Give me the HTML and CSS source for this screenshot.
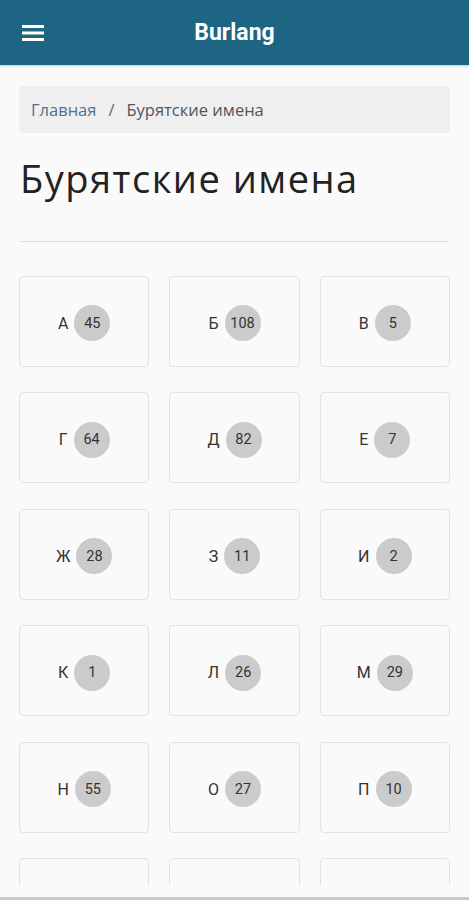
FILE: index.html
```html
<!DOCTYPE html>
<html lang="ru">
<head>
    <meta charset="UTF-8">
    <meta name="viewport" content="width=device-width, initial-scale=1.0">
    <title>Burlang - Бурятские имена</title>
    <link rel="stylesheet" href="styles.css">
</head>
<body>
    <div class="app">
        <header class="topbar">
            <button class="menu-btn" aria-label="Меню">
                <svg width="22" height="16" viewBox="0 0 22 16">
                    <rect x="0" y="0" width="22" height="3" fill="#fff"/>
                    <rect x="0" y="6.5" width="22" height="3" fill="#fff"/>
                    <rect x="0" y="13" width="22" height="3" fill="#fff"/>
                </svg>
            </button>
            <div class="brand">Burlang</div>
        </header>

        <main class="content">
            <nav class="breadcrumb">
                <a href="#">Главная</a>
                <span class="sep">/</span>
                <span class="current">Бурятские имена</span>
            </nav>

            <h1>Бурятские имена</h1>
            <hr>

            <div class="letters">
                <a class="letter-card" href="#">А <span class="badge">45</span></a>
                <a class="letter-card" href="#">Б <span class="badge">108</span></a>
                <a class="letter-card" href="#">В <span class="badge">5</span></a>
                <a class="letter-card" href="#">Г <span class="badge">64</span></a>
                <a class="letter-card" href="#">Д <span class="badge">82</span></a>
                <a class="letter-card" href="#">Е <span class="badge">7</span></a>
                <a class="letter-card" href="#">Ж <span class="badge">28</span></a>
                <a class="letter-card" href="#">З <span class="badge">11</span></a>
                <a class="letter-card" href="#">И <span class="badge">2</span></a>
                <a class="letter-card" href="#">К <span class="badge">1</span></a>
                <a class="letter-card" href="#">Л <span class="badge">26</span></a>
                <a class="letter-card" href="#">М <span class="badge">29</span></a>
                <a class="letter-card" href="#">Н <span class="badge">55</span></a>
                <a class="letter-card" href="#">О <span class="badge">27</span></a>
                <a class="letter-card" href="#">П <span class="badge">10</span></a>
                <a class="letter-card" href="#">Р <span class="badge">3</span></a>
                <a class="letter-card" href="#">С <span class="badge">40</span></a>
                <a class="letter-card" href="#">Т <span class="badge">30</span></a>
            </div>
        </main>

        <div class="bottom-band"></div>
    </div>
</body>
</html>
```

FILE: styles.css
```css
/* Page */
body {
    margin: 0;
    padding: 0;
    background-color: #fafafa;
    font-family: "Open Sans", "Noto Sans", sans-serif;
    color: #222;
}

.app {
    height: 900px;
    display: flex;
    flex-direction: column;
    overflow: hidden;
}

/* Top bar */
.topbar {
    height: 65px;
    flex-shrink: 0;
    background-color: #1e6584;
    display: flex;
    align-items: center;
    position: relative;
    box-shadow: 0 1px 2px rgba(0, 0, 0, 0.2);
}

.menu-btn {
    margin-left: 22px;
    padding: 0;
    border: none;
    background: none;
    display: flex;
    cursor: pointer;
}

.brand {
    position: absolute;
    left: 0;
    right: 0;
    text-align: center;
    font-family: Roboto, "Liberation Sans", sans-serif;
    font-weight: bold;
    font-size: 23px;
    color: #fff;
    pointer-events: none;
}

/* Content */
.content {
    flex: 1;
    overflow: hidden;
    padding: 21px 19px 0;
}

.breadcrumb {
    height: 47px;
    display: flex;
    align-items: center;
    gap: 12px;
    padding: 0 12px;
    background-color: #efefef;
    border-radius: 4px;
    font-size: 16.5px;
}

.breadcrumb a {
    color: #4e7192;
    text-decoration: none;
}

.breadcrumb .sep {
    color: #666;
}

.breadcrumb .current {
    color: #555;
}

h1 {
    margin: 23px 1px 0;
    font-size: 38px;
    font-weight: 400;
    letter-spacing: 1.5px;
    line-height: 1.2;
    color: #222;
}

hr {
    margin: 39px 1px 0;
    border: none;
    border-top: 1px solid #dcdcdc;
}

/* Letters grid */
.letters {
    margin-top: 34px;
    display: grid;
    grid-template-columns: repeat(3, 1fr);
    column-gap: 20px;
    row-gap: 25.5px;
}

.letter-card {
    box-sizing: border-box;
    height: 91px;
    padding-top: 4px;
    display: flex;
    align-items: center;
    justify-content: center;
    gap: 6px;
    border: 1px solid #e3e3e3;
    border-radius: 4px;
    background-color: #fafafa;
    font-family: Roboto, "Liberation Sans", sans-serif;
    font-size: 16px;
    color: #333;
    text-decoration: none;
}

.badge {
    width: 36px;
    height: 36px;
    border-radius: 50%;
    background-color: #cbcbcb;
    display: flex;
    align-items: center;
    justify-content: center;
    font-size: 14.5px;
    color: #333;
}

.bottom-band {
    height: 12px;
    flex-shrink: 0;
    background-color: #fafafa;
    border-bottom: 3px solid #c8c8c8;
}
```
